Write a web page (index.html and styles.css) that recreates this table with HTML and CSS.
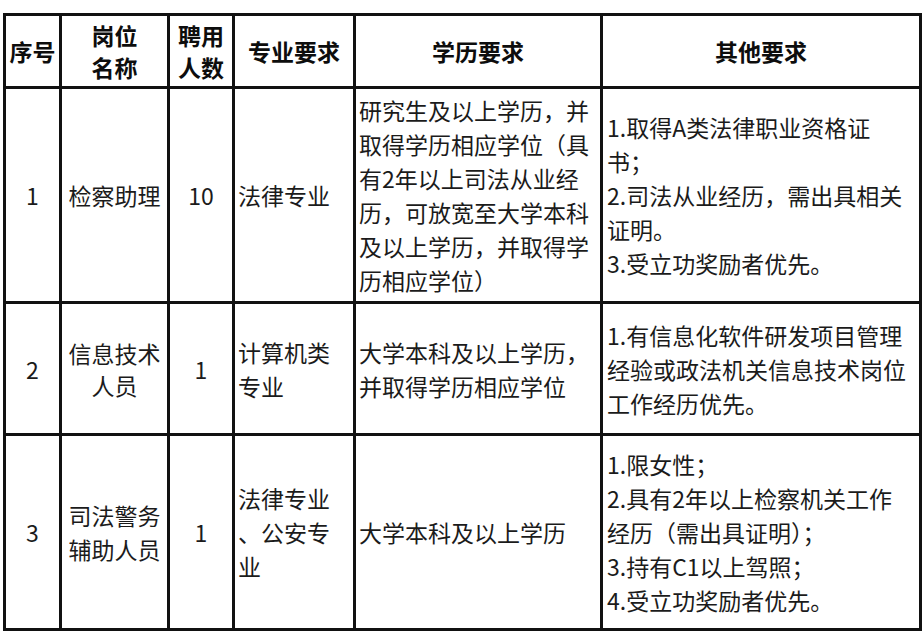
FILE: index.html
```html
<!DOCTYPE html>
<html lang="zh-CN">
<head>
<meta charset="utf-8">
<title>招聘岗位</title>
<link rel="stylesheet" href="styles.css">
</head>
<body>
<table class="jobs">
  <colgroup>
    <col class="c-no">
    <col class="c-name">
    <col class="c-count">
    <col class="c-major">
    <col class="c-edu">
    <col class="c-other">
  </colgroup>
  <thead>
    <tr class="r-head">
      <th>序号</th>
      <th>岗位<br>名称</th>
      <th>聘用<br>人数</th>
      <th>专业要求</th>
      <th>学历要求</th>
      <th>其他要求</th>
    </tr>
  </thead>
  <tbody>
    <tr class="r-1">
      <td class="center">1</td>
      <td class="center">检察助理</td>
      <td class="center">10</td>
      <td class="left">法律专业</td>
      <td class="left">研究生及以上学历，并<br>取得学历相应学位（具<br>有2年以上司法从业经<br>历，可放宽至大学本科<br>及以上学历，并取得学<br>历相应学位）</td>
      <td class="left wide">1.取得A类法律职业资格证<br>书；<br>2.司法从业经历，需出具相关<br>证明。<br>3.受立功奖励者优先。</td>
    </tr>
    <tr class="r-2">
      <td class="center">2</td>
      <td class="center tight">信息技术<br>人员</td>
      <td class="center">1</td>
      <td class="left">计算机类<br>专业</td>
      <td class="left">大学本科及以上学历，<br>并取得学历相应学位</td>
      <td class="left wide">1.有信息化软件研发项目管理<br>经验或政法机关信息技术岗位<br>工作经历优先。</td>
    </tr>
    <tr class="r-3">
      <td class="center">3</td>
      <td class="center">司法警务<br>辅助人员</td>
      <td class="center">1</td>
      <td class="left">法律专业<br>、公安专<br>业</td>
      <td class="left">大学本科及以上学历</td>
      <td class="left wide">1.限女性；<br>2.具有2年以上检察机关工作<br>经历（需出具证明）；<br>3.持有C1以上驾照；<br>4.受立功奖励者优先。</td>
    </tr>
  </tbody>
</table>
</body>
</html>
```

FILE: styles.css
```css
html, body {
  margin: 0;
  padding: 0;
  background: #ffffff;
}

body {
  font-family: "Noto Sans CJK SC", "Noto Sans", sans-serif;
  color: #1b1b1b;
}

.jobs {
  border-collapse: collapse;
  table-layout: fixed;
  width: 916px;
  margin: 13px 0 0 3px;
}

.c-no { width: 56px; }
.c-name { width: 108px; }
.c-count { width: 65px; }
.c-major { width: 121px; }
.c-edu { width: 247px; }
.c-other { width: 319px; }

.jobs th,
.jobs td {
  border: 3px solid #111111;
  vertical-align: middle;
  white-space: nowrap;
  overflow: hidden;
  font-size: 23px;
}

.jobs th {
  font-weight: 700;
  color: #0d0d0d;
  line-height: 32px;
  text-align: center;
  padding: 0;
}

.jobs td {
  font-weight: 400;
  line-height: 34px;
  padding: 0 2px 0 3px;
}

.jobs td.center {
  text-align: center;
  padding: 0;
}

.jobs td.tight {
  line-height: 32px;
}

.jobs td.left {
  text-align: left;
}

.jobs td.wide {
  padding-left: 4px;
}

.r-head th { height: 70px; }
.r-1 td { height: 212px; }
.r-2 td { height: 129px; }
.r-3 td { height: 192px; }
```
